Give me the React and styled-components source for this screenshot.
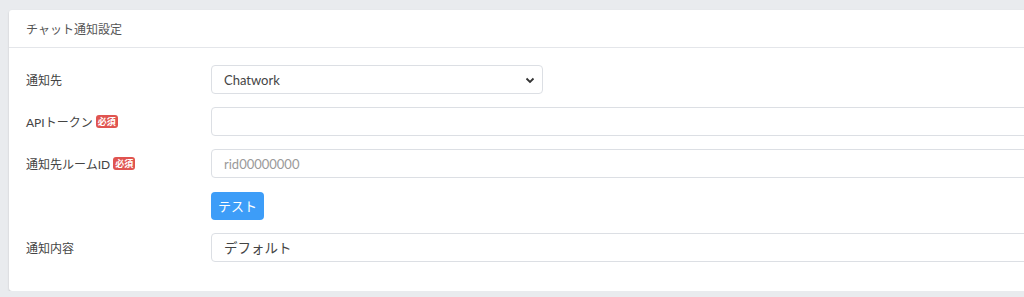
import React from 'react'
import styled, { createGlobalStyle } from 'styled-components'

const GlobalStyle = createGlobalStyle`
  html, body {
    margin: 0;
    padding: 0;
    background: #e9ebee;
    overflow: hidden;
  }
  body {
    font-family: "Lato", "Noto Sans CJK JP", sans-serif;
    color: #444;
  }
`

const Page = styled.div`
  padding: 10px 0 0 9px;
  width: 1200px;
`

const Card = styled.section`
  background: #fff;
  border-radius: 3px;
  box-shadow: 0 1px 2px rgba(0, 0, 0, 0.18);
  width: 1120px;
`

const CardHeader = styled.header`
  height: 37px;
  display: flex;
  align-items: center;
  padding: 0 17px;
  border-bottom: 1px solid #e4e6ea;
  font-size: 12px;
  color: #555;
`

const CardBody = styled.div`
  padding: 17px 17px 29px;
  display: flex;
  flex-direction: column;
  gap: 13px;
`

const Row = styled.div`
  display: grid;
  grid-template-columns: 185px 1fr;
  align-items: center;
  min-height: 29px;
`

const Label = styled.label`
  display: flex;
  align-items: center;
  gap: 3px;
  font-size: 12px;
  color: #444;
`

const Badge = styled.span`
  display: inline-flex;
  align-items: center;
  justify-content: center;
  height: 13px;
  padding: 0 2px;
  border-radius: 3px;
  background: #e05450;
  color: #fff;
  font-size: 9px;
  font-weight: 700;
  line-height: 1;
`

const fieldBase = `
  box-sizing: border-box;
  height: 29px;
  border: 1px solid #dcdfe4;
  border-radius: 4px;
  background: #fff;
  padding: 0 12px;
  font-family: "Lato", "Noto Sans CJK JP", sans-serif;
  color: #444;
  outline: none;
`

const Select = styled.select`
  ${fieldBase}
  width: ${({ width = '100%' }) => width};
  font-size: ${({ size = '13px' }) => size};
  appearance: none;
  background-image: url("data:image/svg+xml,%3Csvg xmlns='http://www.w3.org/2000/svg' width='10' height='8' viewBox='0 0 10 8'%3E%3Cpath d='M1.5 2.5 5 6l3.5-3.5' fill='none' stroke='%23333' stroke-width='1.8'/%3E%3C/svg%3E");
  background-repeat: no-repeat;
  background-position: right 7px center;
`

const Input = styled.input`
  ${fieldBase}
  width: 100%;
  font-size: 13px;

  &::placeholder {
    color: #9a9a9a;
  }
`

const Button = styled.button`
  height: 28px;
  padding: 0 7px;
  border: none;
  border-radius: 4px;
  background: #3d9df8;
  color: #fff;
  font-size: 13px;
  font-family: "Lato", "Noto Sans CJK JP", sans-serif;
  justify-self: start;
  cursor: pointer;
`

const App = () => {
  return (
    <>
      <GlobalStyle />
      <Page>
        <Card>
          <CardHeader>チャット通知設定</CardHeader>
          <CardBody>
            <Row>
              <Label>通知先</Label>
              <Select width="332px" defaultValue="chatwork">
                <option value="chatwork">Chatwork</option>
              </Select>
            </Row>
            <Row>
              <Label>
                APIトークン<Badge>必須</Badge>
              </Label>
              <Input type="text" />
            </Row>
            <Row>
              <Label>
                通知先ルームID<Badge>必須</Badge>
              </Label>
              <Input type="text" placeholder="rid00000000" />
            </Row>
            <Row>
              <span />
              <Button>テスト</Button>
            </Row>
            <Row>
              <Label>通知内容</Label>
              <Select size="13.5px" defaultValue="default">
                <option value="default">デフォルト</option>
              </Select>
            </Row>
          </CardBody>
        </Card>
      </Page>
    </>
  )
}

export default App
